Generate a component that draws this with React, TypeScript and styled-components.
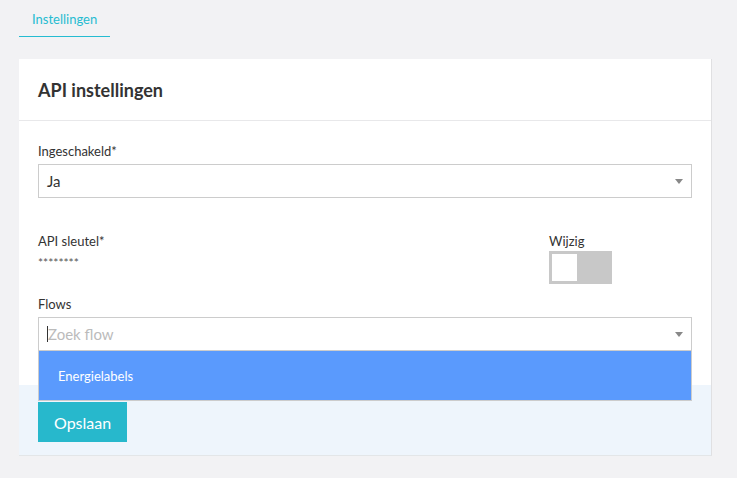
import styled, { createGlobalStyle } from 'styled-components';

const GlobalStyle = createGlobalStyle`
  html, body {
    margin: 0;
    padding: 0;
    background: #f2f2f4;
    font-family: Lato, 'Open Sans', 'Liberation Sans', sans-serif;
    color: #333;
  }
  * { box-sizing: border-box; }
`;

const Page = styled.div`
  padding: 0 25px 0 19px;
  min-height: 478px;
`;

const Tabs = styled.nav`
  display: flex;
  height: 37px;
  margin-bottom: 22px;
`;

const Tab = styled.div<{ active?: boolean }>`
  padding: 0 13px;
  height: 37px;
  line-height: 38px;
  font-size: 13px;
  color: ${({ active }) => (active ? '#26bcd1' : '#666')};
  border-bottom: 1px solid ${({ active }) => (active ? '#26bcd1' : 'transparent')};
`;

const Card = styled.section`
  background: #fff;
  border-right: 1px solid #e0e0e2;
  border-bottom: 1px solid #e3e6e8;
`;

const CardHeader = styled.header`
  height: 62px;
  display: flex;
  align-items: center;
  padding: 0 19px;
  border-bottom: 1px solid #e8e8ea;
`;

const CardTitle = styled.h2`
  margin: 0;
  font-size: 18px;
  font-weight: 700;
  color: #333;
`;

const CardBody = styled.div`
  padding: 22px 19px 34px;
`;

const Field = styled.div`
  position: relative;
`;

const Label = styled.div<{ tight?: boolean }>`
  font-size: 13px;
  line-height: 16px;
  color: #333;
  margin-bottom: ${({ tight }) => (tight ? '2px' : '5px')};
`;

const SelectBox = styled.div`
  position: relative;
  height: 34px;
  border: 1px solid #ccc;
  background: #fff;
  display: flex;
  align-items: center;
  padding: 0 30px 0 8px;
  font-size: 15px;
  color: #333;
`;

const Arrow = styled.span`
  position: absolute;
  right: 8px;
  top: 50%;
  margin-top: -2px;
  width: 0;
  height: 0;
  border-left: 4px solid transparent;
  border-right: 4px solid transparent;
  border-top: 5px solid #888;
`;

const Placeholder = styled.span`
  color: #bbb;
  font-size: 15px;
`;

const Caret = styled.span`
  display: inline-block;
  width: 1px;
  height: 16px;
  background: #333;
`;

const Row = styled.div`
  display: grid;
  grid-template-columns: 1fr 143px;
  margin: 35px 0 12px;
`;

const Secret = styled.div`
  font-size: 12px;
  line-height: 14px;
  color: #555;
  margin-top: 7px;
`;

const Toggle = styled.div<{ on?: boolean }>`
  width: 63px;
  height: 33px;
  background: ${({ on }) => (on ? '#26bcd1' : '#c8c8c8')};
  padding: 3px;
  display: flex;
  justify-content: ${({ on }) => (on ? 'flex-end' : 'flex-start')};
`;

const Knob = styled.div`
  width: 25px;
  height: 27px;
  background: #fff;
`;

const Menu = styled.div`
  position: absolute;
  left: 0;
  right: 0;
  top: 100%;
  z-index: 2;
  border: 1px solid #ccc;
  border-top: none;
`;

const Option = styled.div<{ highlighted?: boolean }>`
  height: 49px;
  display: flex;
  align-items: center;
  padding-left: 19px;
  font-size: 13px;
  background: ${({ highlighted }) => (highlighted ? '#5a9afd' : '#fff')};
  color: ${({ highlighted }) => (highlighted ? '#fff' : '#333')};
`;

const CardFooter = styled.footer`
  background: #eef5fc;
  padding: 17px 19px 13px;
`;

const SaveButton = styled.button`
  height: 40px;
  padding: 0 16px;
  border: none;
  background: #27b8cc;
  color: #fff;
  font-family: inherit;
  font-size: 16px;
  cursor: pointer;
`;

export default function App() {
  return (
    <>
      <GlobalStyle />
      <Page>
        <Tabs>
          <Tab active>Instellingen</Tab>
        </Tabs>
        <Card>
          <CardHeader>
            <CardTitle>API instellingen</CardTitle>
          </CardHeader>
          <CardBody>
            <Field>
              <Label>Ingeschakeld*</Label>
              <SelectBox>
                Ja
                <Arrow />
              </SelectBox>
            </Field>
            <Row>
              <div>
                <Label>API sleutel*</Label>
                <Secret>********</Secret>
              </div>
              <div>
                <Label tight>Wijzig</Label>
                <Toggle>
                  <Knob />
                </Toggle>
              </div>
            </Row>
            <Field>
              <Label>Flows</Label>
              <SelectBox>
                <Caret />
                <Placeholder>Zoek flow</Placeholder>
                <Arrow />
              </SelectBox>
              <Menu>
                <Option highlighted>Energielabels</Option>
              </Menu>
            </Field>
          </CardBody>
          <CardFooter>
            <SaveButton>Opslaan</SaveButton>
          </CardFooter>
        </Card>
      </Page>
    </>
  );
}
